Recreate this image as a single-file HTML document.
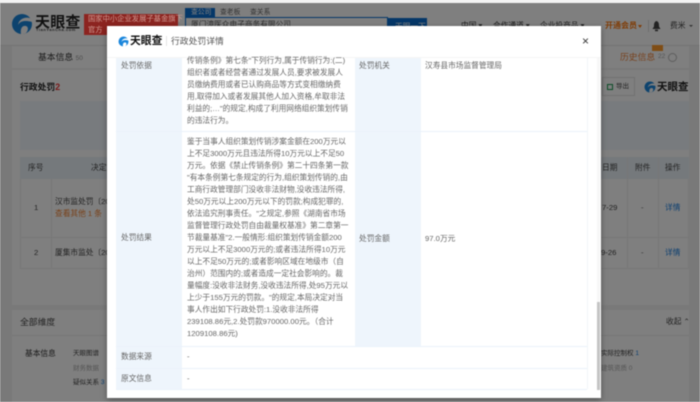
<!DOCTYPE html>
<html lang="zh"><head><meta charset="utf-8"><style>
html,body{margin:0;padding:0;width:700px;height:402px;overflow:hidden;background:#f3f3f3}
body{font-family:"Liberation Sans","Noto Sans CJK SC",sans-serif;position:relative;color:#333}
#w{position:absolute;left:0;top:0;width:700px;height:402px;filter:blur(.5px);overflow:hidden}
.a{position:absolute;white-space:pre;line-height:12px}
.b{position:absolute}
#ov{position:absolute;left:0;top:3px;width:700px;height:399px;background:rgba(0,0,0,.5)}
#m{position:absolute;left:107px;top:26px;width:494px;height:372px;background:#fff;box-shadow:0 2px 6px rgba(0,0,0,.35)}
.t{position:absolute;white-space:pre;font-size:7.7px;line-height:12px;color:#666}
</style></head><body><div id="w">
<div class="b" style="left:0;top:3px;width:700px;height:42px;background:#fff"></div>
<svg class="b" style="left:11px;top:13px" width="22" height="22" viewBox="0 0 22 22"><circle cx="11" cy="11" r="10" fill="#1a86dc"/><path d="M21 6C16 3 8 5 7 12c2-4 7-5 14-3z" fill="#fff"/><path d="M10 21c-1-5 1-9 5-8 3 1 2 5 0 7-1 1-3 1-5 1z" fill="#fff"/></svg>
<div class="a" style="left:35px;top:13px;font-size:15px;line-height:20px;font-weight:700;letter-spacing:.2px;color:#222">天眼查</div>
<div class="a" style="left:36px;top:27px;font-size:4px;line-height:6px;font-weight:700;letter-spacing:.55px;color:#444">TianYanCha.com</div>
<div class="b" style="left:185px;top:8px;width:30px;height:9px;background:#0a6fd0"></div>
<div class="a" style="left:191px;top:7px;font-size:6.8px;color:#fff">查公司</div>
<div class="a" style="left:220px;top:7px;font-size:6.8px;color:#666">查老板</div>
<div class="a" style="left:250px;top:7px;font-size:6.8px;color:#666">查关系</div>
<div class="b" style="left:185px;top:17px;width:203px;height:18px;border:1px solid #0a6fd0;box-sizing:border-box;background:#fff"></div>
<div class="a" style="left:191px;top:19px;font-size:7.7px;color:#555">厦门漳医众电子商务有限公司</div>
<div class="b" style="left:388px;top:18px;width:39px;height:18px;background:#0a6fd0"></div>
<div class="a" style="left:395px;top:21px;font-size:7.7px;color:#fff">天眼一下</div>
<div class="a" style="left:461px;top:20px;font-size:7.7px;color:#333">中国 ▾</div>
<div class="a" style="left:493px;top:20px;font-size:7.7px;color:#333">合作通道 ▾</div>
<div class="a" style="left:540px;top:20px;font-size:7.7px;color:#333">企业投商品 ▾</div>
<div class="a" style="left:605px;top:20px;font-size:8px;font-weight:700;color:#ff7a10">开通会员</div>
<div class="b" style="left:638px;top:25px;border:2.5px solid transparent;border-top:3px solid #ff7a10"></div>
<div class="b" style="left:648px;top:20px;width:1px;height:12px;background:#ddd"></div>
<svg class="b" style="left:652px;top:21px" width="9" height="11" viewBox="0 0 9 11"><path d="M4.5 0C2 1 2 3 2 5.500L.5 8h8L7 5.500C7 3 7 1 4.500 0z" fill="#444"/><rect x="3" y="8.600" width="3" height="1.600" fill="#444"/></svg>
<div class="a" style="left:670px;top:20px;font-size:7.7px;color:#444">费米</div>
<div class="b" style="left:689px;top:25px;border:2px solid transparent;border-top:2.500px solid #666"></div>
<div class="b" style="left:0;top:45px;width:700px;height:1px;background:#e6e6e6"></div>
<div class="b" style="left:12px;top:46px;width:677px;height:22px;background:#fff"></div>
<div class="a" style="left:38px;top:51px;font-size:8.800px;color:#333">基本信息 <span style="font-size:6.500px;color:#999">50</span></div>
<div class="b" style="left:652px;top:45px;width:11px;height:6px;background:#ff9a2b"></div>
<div class="a" style="left:620px;top:51px;font-size:8.800px;color:#f0843c">历史信息</div>
<div class="a" style="left:658px;top:51px;font-size:6.500px;color:#aaa">22</div>
<div class="b" style="left:668px;top:53px;width:7px;height:7px;border:1px solid #bbb;border-radius:50%"></div>
<div class="b" style="left:12px;top:70px;width:677px;height:235px;background:#fff"></div>
<div class="a" style="left:20px;top:81px;font-size:8.800px;font-weight:700;color:#222">行政处罚<span style="color:#e33">2</span></div>
<div class="b" style="left:602px;top:77px;width:33px;height:19px;border:1px solid #e3e3e3;box-sizing:border-box"></div>
<div class="b" style="left:607px;top:84px;width:6px;height:6px;border:1.500px solid #1a9a50;box-sizing:border-box"></div>
<div class="a" style="left:616px;top:81px;font-size:6.500px;color:#444">导出</div>
<svg class="b" style="left:644px;top:81px" width="12" height="12" viewBox="0 0 22 22"><circle cx="11" cy="11" r="10" fill="#1a86dc"/><path d="M21 6C16 3 8 5 7 12c2-4 7-5 14-3z" fill="#fff"/><path d="M10 21c-1-5 1-9 5-8 3 1 2 5 0 7-1 1-3 1-5 1z" fill="#fff"/></svg>
<div class="a" style="left:657px;top:81px;font-size:10.500px;font-weight:700;color:#222">天眼查</div>
<div class="b" style="left:20px;top:101px;width:669px;height:49px;background:#f0f7fd"></div>
<div class="b" style="left:20px;top:157px;width:669px;height:22px;background:#ebf3f9"></div>
<div class="b" style="left:20px;top:179px;width:669px;height:90px;border:1px solid #eee;border-top:0;box-sizing:border-box"></div>
<div class="b" style="left:20px;top:237px;width:669px;height:1px;background:#eee"></div>
<div class="b" style="left:51px;top:179px;width:1px;height:90px;background:#eee"></div>
<div class="b" style="left:627px;top:157px;width:1px;height:112px;background:#eee"></div>
<div class="b" style="left:658px;top:157px;width:1px;height:112px;background:#eee"></div>
<div class="a" style="left:28px;top:162px;font-size:7.700px;color:#444">序号</div>
<div class="a" style="left:91px;top:162px;font-size:7.700px;color:#444">决定文书号</div>
<div class="a" style="left:602px;top:162px;font-size:7.700px;color:#444">日期</div>
<div class="a" style="left:635px;top:162px;font-size:7.700px;color:#444">附件</div>
<div class="a" style="left:665px;top:162px;font-size:7.700px;color:#444">操作</div>
<div class="a" style="left:34px;top:202px;font-size:7.700px;color:#444">1</div>
<div class="a" style="left:55px;top:196px;font-size:7.700px;color:#444">汉市监处罚〔20</div>
<div class="a" style="left:55px;top:208px;font-size:7.700px;color:#f08030">查看其他 1 条</div>
<div class="a" style="left:34px;top:247px;font-size:7.700px;color:#444">2</div>
<div class="a" style="left:55px;top:247px;font-size:7.700px;color:#444">厦集市监处〔20</div>
<div class="a" style="left:602px;top:202px;font-size:7.700px;color:#444">7-29</div>
<div class="a" style="left:601px;top:247px;font-size:7.700px;color:#444">9-26</div>
<div class="a" style="left:641px;top:202px;font-size:7.700px;color:#666">-</div>
<div class="a" style="left:641px;top:247px;font-size:7.700px;color:#666">-</div>
<div class="a" style="left:665px;top:202px;font-size:7.700px;color:#1a7fe0">详情</div>
<div class="a" style="left:665px;top:247px;font-size:7.700px;color:#1a7fe0">详情</div>
<div class="b" style="left:12px;top:310px;width:677px;height:92px;background:#fff"></div>
<div class="b" style="left:12px;top:335px;width:677px;height:1px;background:#eee"></div>
<div class="a" style="left:20px;top:316px;font-size:8.800px;color:#444">全部维度</div>
<div class="a" style="left:666px;top:316px;font-size:7.700px;color:#444">收起 ⌃</div>
<div class="a" style="left:25px;top:348px;font-size:7.700px;color:#333">基本信息</div>
<div class="a" style="left:73px;top:348px;font-size:6.500px;color:#444">天眼图谱</div>
<div class="a" style="left:73px;top:363px;font-size:6.500px;color:#aaa">财务数据</div>
<div class="a" style="left:73px;top:377px;font-size:6.500px;color:#444">疑似关系 <span style="color:#1a7fe0">3</span></div>
<div class="a" style="left:601px;top:348px;font-size:6.500px;color:#444">实际控制权 <span style="color:#1a7fe0">1</span></div>
<div class="a" style="left:601px;top:363px;font-size:6.500px;color:#aaa">建筑资质 0</div>
<div id="ov"></div>
<div class="b" style="left:84px;top:14px;width:94px;height:21px;background:#8c2420"></div>
<div class="a" style="left:88px;top:14px;font-size:7.3px;line-height:10.5px;color:#d09a92">国家中小企业发展子基金旗下
官方</div>
<div id="m">
<svg class="b" style="left:11px;top:10px" width="11" height="11" viewBox="0 0 22 22"><circle cx="11" cy="11" r="10" fill="#1a86dc"/><path d="M21 6C16 3 8 5 7 12c2-4 7-5 14-3z" fill="#fff"/><path d="M10 21c-1-5 1-9 5-8 3 1 2 5 0 7-1 1-3 1-5 1z" fill="#fff"/></svg>
<div class="a" style="left:23px;top:9px;font-size:10.800px;line-height:13px;font-weight:700;color:#111">天眼查</div>
<div class="b" style="left:59px;top:10px;width:1px;height:10px;background:#e4e4e4"></div>
<div class="a" style="left:64px;top:9px;font-size:8.800px;line-height:13px;color:#555">行政处罚详情</div>
<div class="a" style="left:475px;top:8px;font-size:12px;line-height:14px;color:#333">×</div>
<div class="b" style="left:0;top:31px;width:494px;height:1px;background:#f5f5f5"></div>
<div class="b" style="left:490px;top:32px;width:3px;height:332px;background:#f7f7f7"></div>
<div class="b" style="left:9px;top:32px;width:66px;height:331px;background:#eef5fc"></div>
<div class="b" style="left:248px;top:32px;width:66px;height:288px;background:#eef5fc"></div>
<div class="b" style="left:9px;top:105px;width:471px;height:1px;background:#eaf2fa"></div>
<div class="b" style="left:9px;top:320px;width:471px;height:1px;background:#eaf2fa"></div>
<div class="b" style="left:9px;top:342px;width:471px;height:1px;background:#eaf2fa"></div>
<div class="b" style="left:9px;top:363px;width:471px;height:1px;background:#eaf2fa"></div>
<div class="b" style="left:480px;top:32px;width:1px;height:331px;background:#f1f5f9"></div>
<div class="t" style="left:14px;top:34px">处罚依据</div>
<div class="t" style="left:80px;top:29px;height:72px">传销条例》第七条"下列行为,属于传销行为:(二)
组织者或者经营者通过发展人员,要求被发展人
员缴纳费用或者已认购商品等方式变相缴纳费
用,取得加入或者发展其他人加入资格,牟取非法
利益的;…"的规定,构成了利用网络组织策划传销
的违法行为。</div>
<div class="t" style="left:252px;top:34px">处罚机关</div>
<div class="t" style="left:318px;top:34px">汉寿县市场监督管理局</div>
<div class="t" style="left:14px;top:206px">处罚结果</div>
<div class="t" style="left:80px;top:110px">鉴于当事人组织策划传销涉案金额在200万元以
上不足3000万元且违法所得10万元以上不足50
万元。依据《禁止传销条例》第二十四条第一款
"有本条例第七条规定的行为,组织策划传销的,由
工商行政管理部门没收非法财物,没收违法所得,
处50万元以上200万元以下的罚款;构成犯罪的,
依法追究刑事责任。"之规定,参照《湖南省市场
监督管理行政处罚自由裁量权基准》第二章第一
节裁量基准"2.一般情形:组织策划传销金额200
万元以上不足3000万元的;或者违法所得10万元
以上不足50万元的;或者影响区域在地级市（自
治州）范围内的;或者造成一定社会影响的。裁
量幅度:没收非法财务,没收违法所得,处95万元以
上少于155万元的罚款。"的规定,本局决定对当
事人作出如下行政处罚:1.没收非法所得
239108.86元,2.处罚款970000.00元。（合计
1209108.86元)</div>
<div class="t" style="left:252px;top:207px">处罚金额</div>
<div class="t" style="left:318px;top:207px">97.0万元</div>
<div class="t" style="left:14px;top:325px">数据来源</div>
<div class="t" style="left:80px;top:325px">-</div>
<div class="t" style="left:14px;top:347px">原文信息</div>
<div class="t" style="left:80px;top:347px">-</div>
<div class="b" style="left:490px;top:276px;width:3px;height:88px;background:#c4c4c4"></div>
</div>
</div></body></html>
